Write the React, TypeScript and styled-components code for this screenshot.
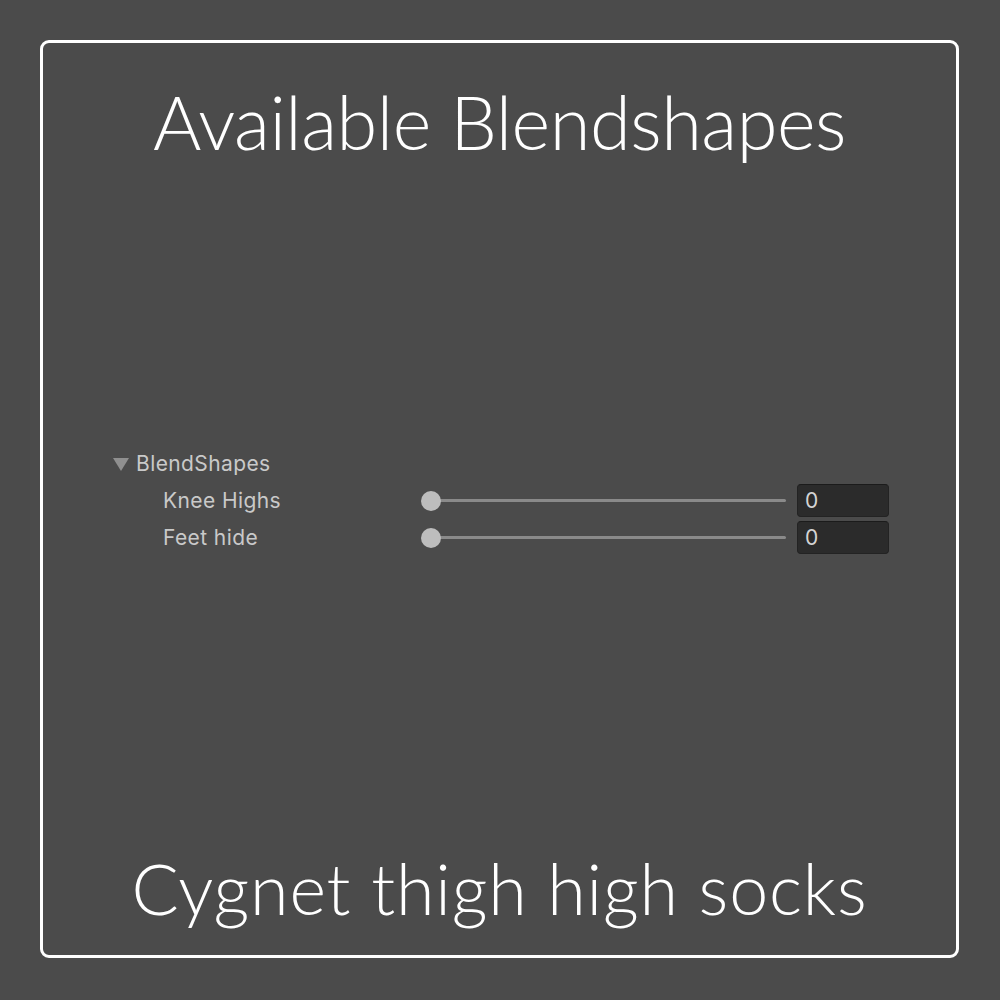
import React from "react"
import styled, { createGlobalStyle } from "styled-components"

const GlobalStyle = createGlobalStyle`
  html, body {
    margin: 0;
    padding: 0;
    background: #4b4b4b;
  }
`

const Page = styled.div`
  width: 1000px;
  height: 1000px;
  padding: 40px 41px 42px 40px;
  box-sizing: border-box;
  background: #4b4b4b;
`

const Frame = styled.div`
  width: 100%;
  height: 100%;
  box-sizing: border-box;
  border: 3px solid #ffffff;
  border-radius: 9px;
  display: flex;
  flex-direction: column;
  align-items: stretch;
`

const Caption = styled.div<{ size: number; spacing: number }>`
  font-family: Lato, "Open Sans", sans-serif;
  font-weight: 300;
  font-size: ${props => props.size}px;
  letter-spacing: ${props => props.spacing}px;
  line-height: 1;
  color: #ffffff;
  text-align: center;
  white-space: nowrap;
`

const Middle = styled.div`
  flex: 1;
  padding: 286px 67px 0 70px;
`

const Inspector = styled.div`
  display: flex;
  flex-direction: column;
  font-family: Inter, "Noto Sans", sans-serif;
  font-size: 21px;
  letter-spacing: 0.4px;
  color: #c9c9c9;
`

const Foldout = styled.div`
  height: 37px;
  display: flex;
  align-items: center;
  gap: 7px;
`

const Arrow = styled.span`
  width: 0;
  height: 0;
  border-left: 8px solid transparent;
  border-right: 8px solid transparent;
  border-top: 13px solid #8f8f8f;
  margin-top: 1px;
`

const Row = styled.div`
  height: 37px;
  display: grid;
  grid-template-columns: 247px 1fr 92px;
  column-gap: 11px;
  align-items: center;
  padding-left: 50px;
`

const Track = styled.div`
  position: relative;
  height: 3px;
  margin-left: 10px;
  background: #8a8a8a;
  border-radius: 2px;
`

const Knob = styled.div`
  position: absolute;
  top: 50%;
  width: 20px;
  height: 20px;
  margin: -10px 0 0 -10px;
  border-radius: 50%;
  background: #bdbdbd;
`

const Field = styled.div`
  height: 33px;
  box-sizing: border-box;
  background: #2b2b2b;
  border: 1px solid #232323;
  border-top-color: #1b1b1b;
  border-radius: 4px;
  padding: 0 7px;
  display: flex;
  align-items: center;
  color: #d4d4d4;
`

const shapes = [
  { name: "Knee Highs", value: 0 },
  { name: "Feet hide", value: 0 },
]

const BlendRow = ({ name, value }: { name: string; value: number }) => (
  <Row>
    <span>{name}</span>
    <Track>
      <Knob style={{ left: `${value}%` }} />
    </Track>
    <Field>{value}</Field>
  </Row>
)

const App = () => (
  <>
    <GlobalStyle />
    <Page>
      <Frame>
        <Caption size={74} spacing={-0.5} style={{ marginTop: 42 }}>
          Available Blendshapes
        </Caption>
        <Middle>
          <Inspector>
            <Foldout>
              <Arrow />
              <span>BlendShapes</span>
            </Foldout>
            {shapes.map(s => (
              <BlendRow key={s.name} name={s.name} value={s.value} />
            ))}
          </Inspector>
        </Middle>
        <Caption size={70} spacing={0.8} style={{ marginBottom: 32 }}>
          Cygnet thigh high socks
        </Caption>
      </Frame>
    </Page>
  </>
)

export default App
